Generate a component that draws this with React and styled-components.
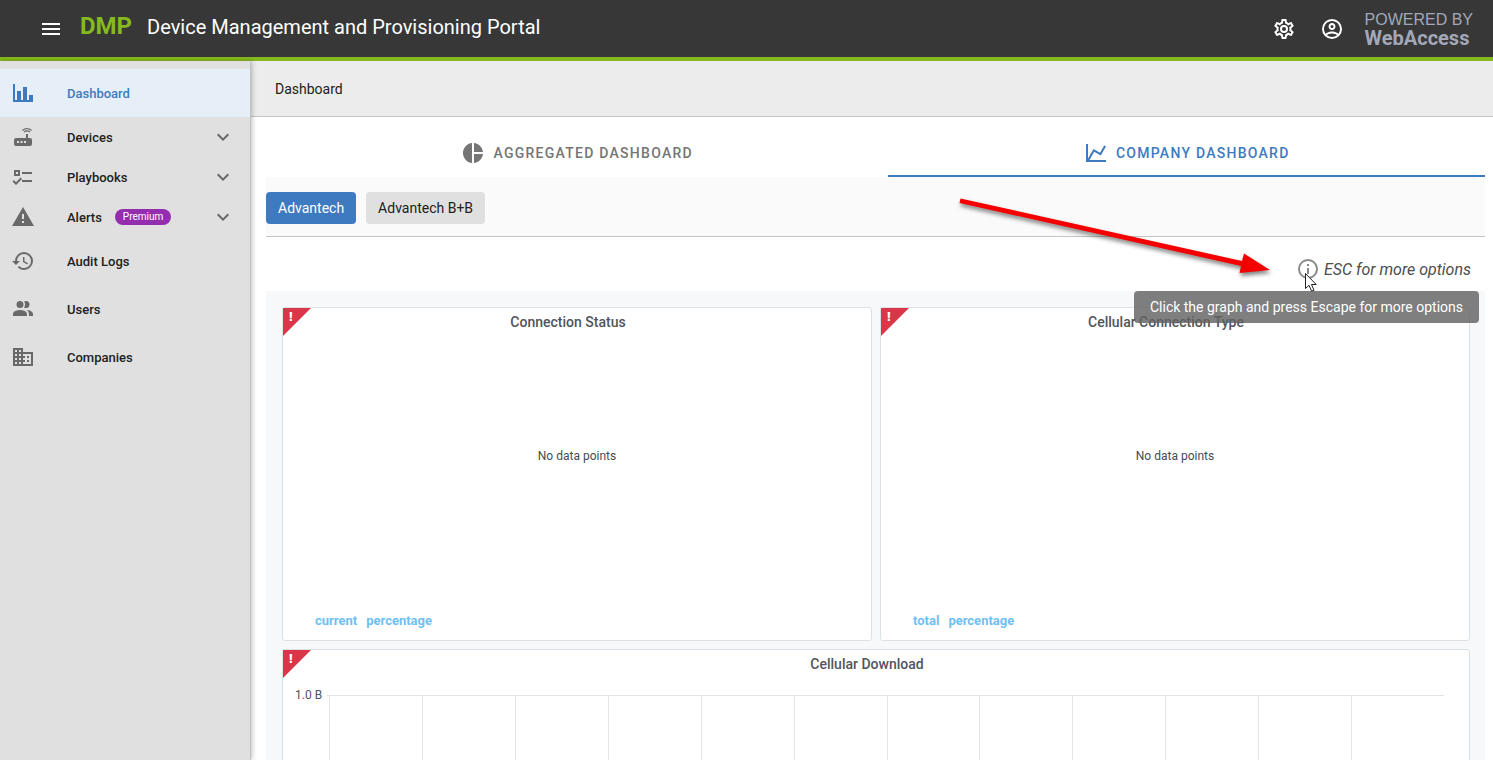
import React from "react";
import styled, { createGlobalStyle } from "styled-components";

const GlobalStyle = createGlobalStyle`
  *, *::before, *::after { box-sizing: border-box; }
  body {
    margin: 0;
    background: #fff;
    color: #212121;
    font-family: Roboto, "Liberation Sans", sans-serif;
    font-size: 14px;
    line-height: 20px;
  }
  button { font: inherit; color: inherit; border: 0; padding: 0; background: none; cursor: pointer; }
  a { color: inherit; text-decoration: none; }
  ul { list-style: none; margin: 0; padding: 0; }
  h1, h2 { margin: 0; }
`;

const paths = {
  menu: "M3,6H21V8H3V6M3,11H21V13H3V11M3,16H21V18H3V16Z",
  cog: "M12,8A4,4 0 0,1 16,12A4,4 0 0,1 12,16A4,4 0 0,1 8,12A4,4 0 0,1 12,8M12,10A2,2 0 0,0 10,12A2,2 0 0,0 12,14A2,2 0 0,0 14,12A2,2 0 0,0 12,10M10,22C9.75,22 9.54,21.82 9.5,21.58L9.13,18.93C8.5,18.68 7.96,18.34 7.44,17.94L4.95,18.95C4.73,19.03 4.46,18.95 4.34,18.73L2.34,15.27C2.21,15.05 2.27,14.78 2.46,14.63L4.57,12.97L4.5,12L4.57,11L2.46,9.37C2.27,9.22 2.21,8.95 2.34,8.73L4.34,5.27C4.46,5.05 4.73,4.96 4.95,5.05L7.44,6.05C7.96,5.66 8.5,5.32 9.13,5.07L9.5,2.42C9.54,2.18 9.75,2 10,2H14C14.25,2 14.46,2.18 14.5,2.42L14.87,5.07C15.5,5.32 16.04,5.66 16.56,6.05L19.05,5.05C19.27,4.96 19.54,5.05 19.66,5.27L21.66,8.73C21.79,8.95 21.73,9.22 21.54,9.37L19.43,11L19.5,12L19.43,13L21.54,14.63C21.73,14.78 21.79,15.05 21.66,15.27L19.66,18.73C19.54,18.95 19.27,19.04 19.05,18.95L16.56,17.95C16.04,18.34 15.5,18.68 14.87,18.93L14.5,21.58C14.46,21.82 14.25,22 14,22H10M11.25,4L10.88,6.61C9.68,6.86 8.62,7.5 7.85,8.39L5.44,7.35L4.69,8.65L6.8,10.2C6.4,11.37 6.4,12.64 6.8,13.8L4.68,15.36L5.43,16.66L7.86,15.62C8.63,16.5 9.68,17.14 10.87,17.38L11.24,20H12.76L13.13,17.39C14.32,17.14 15.37,16.5 16.14,15.62L18.57,16.66L19.32,15.36L17.2,13.81C17.6,12.64 17.6,11.37 17.2,10.2L19.31,8.65L18.56,7.35L16.15,8.39C15.38,7.5 14.32,6.86 13.12,6.62L12.75,4H11.25Z",
  account:
    "M12,2A10,10 0 0,0 2,12A10,10 0 0,0 12,22A10,10 0 0,0 22,12A10,10 0 0,0 12,2M7.07,18.28C7.5,17.38 10.12,16.5 12,16.5C13.88,16.5 16.5,17.38 16.93,18.28C15.57,19.36 13.86,20 12,20C10.14,20 8.43,19.36 7.07,18.28M18.36,16.83C16.93,15.09 13.46,14.5 12,14.5C10.54,14.5 7.07,15.09 5.64,16.83C4.62,15.5 4,13.82 4,12C4,7.59 7.59,4 12,4C16.41,4 20,7.59 20,12C20,13.82 19.38,15.5 18.36,16.83M12,6C10.06,6 8.5,7.56 8.5,9.5C8.5,11.44 10.06,13 12,13C13.94,13 15.5,11.44 15.5,9.5C15.5,7.56 13.94,6 12,6M12,11A1.5,1.5 0 0,1 10.5,9.5A1.5,1.5 0 0,1 12,8A1.5,1.5 0 0,1 13.5,9.5A1.5,1.5 0 0,1 12,11Z",
  bars: "M22,21H2V3H4V19H6V10H10V19H12V6H16V19H18V14H22V21Z",
  router:
    "M20.2,5.9L21,5.1C19.6,3.7 17.8,3 16,3C14.2,3 12.4,3.7 11,5.1L11.8,5.9C13,4.8 14.5,4.2 16,4.2C17.5,4.2 19,4.8 20.2,5.9M19.3,6.7C18.4,5.8 17.2,5.3 16,5.3C14.8,5.3 13.6,5.8 12.7,6.7L13.5,7.5C14.2,6.8 15.1,6.5 16,6.5C16.9,6.5 17.8,6.8 18.5,7.5L19.3,6.7M19,13H17V9H15V13H5A2,2 0 0,0 3,15V19A2,2 0 0,0 5,21H19A2,2 0 0,0 21,19V15A2,2 0 0,0 19,13M8,18H6V16H8V18M11.5,18H9.5V16H11.5V18M15,18H13V16H15V18Z",
  checks:
    "M3,5H9V11H3V5M5,7V9H7V7H5M11,7H21V9H11V7M11,15H21V17H11V15M5,20L1.5,16.5L2.91,15.09L5,17.17L9.59,12.59L11,14L5,20Z",
  alert: "M13,14H11V9H13M13,18H11V16H13M1,21H23L12,2L1,21Z",
  history:
    "M13.5,8H12V13L16.28,15.54L17,14.33L13.5,12.25V8M13,3A9,9 0 0,0 4,12H1L4.96,16.03L9,12H6A7,7 0 0,1 13,5A7,7 0 0,1 20,12A7,7 0 0,1 13,19C11.07,19 9.32,18.21 8.06,16.94L6.64,18.36C8.27,20 10.5,21 13,21A9,9 0 0,0 22,12A9,9 0 0,0 13,3",
  users:
    "M16,17V19H2V17S2,13 9,13 16,17 16,17M12.5,7.5A3.5,3.5 0 1,0 9,11A3.5,3.5 0 0,0 12.5,7.5M15.94,13A5.32,5.32 0 0,1 18,17V19H22V17S22,13.37 15.94,13M15,4A3.39,3.39 0 0,0 13.07,4.59A5,5 0 0,1 13.07,10.41A3.39,3.39 0 0,0 15,11A3.5,3.5 0 0,0 15,4Z",
  domain:
    "M18,15H16V17H18M18,11H16V13H18M20,19H12V17H14V15H12V13H14V11H12V9H20M10,7H8V5H10M10,11H8V9H10M10,15H8V13H10M10,19H8V17H10M6,7H4V5H6M6,11H4V9H6M6,15H4V13H6M6,19H4V17H6M12,7V3H2V21H22V7H12Z",
  chevron: "M7.41,8.58L12,13.17L16.59,8.58L18,10L12,16L6,10L7.41,8.58Z",
  pie: "M11,2V22C5.9,21.5 2,17.2 2,12C2,6.8 5.9,2.5 11,2M13,2V11H22C21.5,6.2 17.8,2.5 13,2M13,13V22C17.7,21.5 21.5,17.8 22,13H13Z",
  line: "M16,11.78L20.24,4.45L21.97,5.45L16.74,14.5L10.23,10.75L5.46,19H22V21H2V3H4V17.54L9.5,8L16,11.78Z",
  info: "M11,9H13V7H11M12,20C7.59,20 4,16.41 4,12C4,7.59 7.59,4 12,4C16.41,4 20,7.59 20,12C20,16.41 16.41,20 12,20M12,2A10,10 0 0,0 2,12A10,10 0 0,0 12,22A10,10 0 0,0 22,12A10,10 0 0,0 12,2M11,17H13V11H11V17Z",
};

const Svg = styled.svg`
  display: block;
  flex: none;
  width: 24px;
  height: 24px;
  fill: currentColor;
`;

const Icon = ({ name }) => (
  <Svg viewBox="0 0 24 24" aria-hidden="true">
    <path d={paths[name]} />
  </Svg>
);

const Shell = styled.div`
  display: flex;
  flex-direction: column;
  height: 100vh;
  overflow: hidden;
`;

const TopBar = styled.header`
  display: flex;
  align-items: center;
  flex: none;
  height: 61px;
  padding: 0 20px 0 39px;
  border-bottom: 4px solid #86b91f;
  background: #373737;
  color: #fff;
`;

const IconButton = styled.button`
  display: flex;
  color: ${(p) => (p.$muted ? "#8a8a8a" : "inherit")};
`;

const Brand = styled.div`
  display: flex;
  align-items: baseline;
  gap: 15px;
  flex: 1;
  padding: 0 0 4px 17px;
`;

const Logo = styled.span`
  color: #86b91f;
  font-size: 24px;
  font-weight: 700;
  line-height: 32px;
`;

const Title = styled.h1`
  font-size: 20px;
  font-weight: 400;
  line-height: 32px;
`;

const Actions = styled.div`
  display: flex;
  align-items: center;
  gap: 24px;
`;

const Powered = styled.div`
  display: flex;
  flex-direction: column;
  margin-left: -3px;
  color: #a2a8b8;
  font-family: "Liberation Sans", Arial, sans-serif;
  font-size: 16px;
  line-height: 18px;
`;

const WebAccess = styled.strong`
  font-family: Roboto, sans-serif;
  font-size: 20px;
  line-height: 18px;
`;

const Body = styled.div`
  display: flex;
  flex: 1;
  min-height: 0;
`;

const Sidebar = styled.nav`
  position: relative;
  z-index: 1;
  flex: none;
  width: 251px;
  padding-top: 8px;
  border-right: 1px solid #c2c2c2;
  background: #e0e0e0;
  box-shadow: 1px 0 5px rgba(0, 0, 0, 0.25);
`;

const NavLink = styled.a`
  display: flex;
  align-items: center;
  height: ${(p) => (p.$group ? "40px" : "48px")};
  padding: 0 15px 0 11px;
  background: ${(p) => (p.$active ? "#e6eef7" : "transparent")};
  color: ${(p) => (p.$active ? "#3e7abf" : "#212121")};
  font-size: 13px;
  font-weight: 500;

  svg { color: ${(p) => (p.$active ? "#3e7abf" : "#696969")}; }
`;

const NavLabel = styled.span`
  display: flex;
  align-items: center;
  flex: 1;
  gap: 13px;
  padding: 1px 0 0 32px;
  line-height: 21px;
`;

const Badge = styled.span`
  margin-bottom: 2px;
  padding: 0 8px;
  border-radius: 8px;
  background: #942dae;
  color: #fff;
  font-size: 10px;
  font-weight: 400;
  line-height: 16px;
`;

const Main = styled.main`
  flex: 1;
  min-width: 0;
`;

const Breadcrumb = styled.div`
  height: 56px;
  padding: 0 24px;
  border-bottom: 1px solid #c4c4c4;
  background: #ececec;
  line-height: 56px;
`;

const Content = styled.div`
  padding: 12px 8px 0 15px;
`;

const Tabs = styled.div`
  display: flex;
`;

const Tab = styled.button`
  display: flex;
  align-items: center;
  justify-content: center;
  flex: 1 1 auto;
  gap: 8px;
  height: 48px;
  padding: 2px 16px 0;
  border-bottom: 2px solid ${(p) => (p.$active ? "#3e7abf" : "transparent")};
  color: ${(p) => (p.$active ? "#3e7abf" : "#757575")};
  font-weight: 500;
  letter-spacing: 0.09em;
  text-transform: uppercase;
`;

const Companies = styled.div`
  display: flex;
  gap: 10px;
  height: 60px;
  padding-top: 15px;
  border-bottom: 1px solid #c4c4c4;
  background: #fafafa;
`;

const Chip = styled.button`
  height: 32px;
  padding: 0 12px;
  border-radius: 4px;
  background: ${(p) => (p.$active ? "#3e7abf" : "#e0e0e0")};
  color: ${(p) => (p.$active ? "#fff" : "#212121")};
`;

const HintRow = styled.div`
  position: relative;
  z-index: 1;
  display: flex;
  align-items: center;
  justify-content: flex-end;
  gap: 4px;
  height: 54px;
  padding: 10px 14px 0 0;
`;

const Hint = styled.em`
  padding-top: 2px;
  color: #4d4d4d;
  font-size: 16px;
  line-height: 22px;
`;

const Tooltip = styled.div`
  position: absolute;
  top: 54px;
  right: 6px;
  padding: 6px 16px;
  border-radius: 4px;
  background: rgba(97, 97, 97, 0.81);
  color: #fff;
`;

const Arrow = styled.svg`
  position: absolute;
  top: -42px;
  right: 210px;
  width: 320px;
  height: 86px;
  filter: drop-shadow(1px 3px 2px rgba(0, 0, 0, 0.5));
  pointer-events: none;
`;

const Cursor = styled.svg`
  position: absolute;
  top: 35px;
  right: 167px;
  width: 14px;
  height: 21px;
  pointer-events: none;
`;

const Board = styled.div`
  display: grid;
  grid-template-columns: 1fr 1fr;
  gap: 8px;
  padding: 16px 15px 16px 16px;
  background: #f6f8fa;
`;

const Panel = styled.section`
  position: relative;
  display: flex;
  flex-direction: column;
  grid-column: ${(p) => (p.$wide ? "1 / -1" : "auto")};
  height: 334px;
  border: 1px solid #dce1e6;
  border-radius: 3px;
  background: #fff;
`;

const PanelTitle = styled.h2`
  padding: 4px 18px 0 0;
  color: #52545c;
  font-size: 14px;
  font-weight: 500;
  text-align: center;
`;

const Corner = styled.span`
  position: absolute;
  top: 0;
  left: 0;
  width: 28px;
  height: 28px;
  padding-left: 6px;
  background: #d9364a;
  clip-path: polygon(0 0, 100% 0, 0 100%);
  color: #fff;
  font-size: 13px;
  font-weight: 900;
  line-height: 18px;
`;

const Empty = styled.p`
  display: flex;
  align-items: center;
  justify-content: center;
  flex: 1;
  margin: 0;
  padding-bottom: 32px;
  color: #464c54;
  font-size: 12px;
`;

const Legend = styled.div`
  display: flex;
  gap: 9px;
  padding: 0 32px 9px;
`;

const LegendButton = styled.button`
  color: #6fc0f2;
  font-size: 13px;
  font-weight: 700;
`;

const Chart = styled.div`
  display: flex;
  flex: 1;
  gap: 5px;
  padding: 11px 25px 24px 12px;
`;

const AxisLabel = styled.span`
  color: #52545c;
  font-size: 12px;
`;

const Grid = styled.div`
  display: grid;
  grid-template-columns: repeat(12, 1fr);
  flex: 1;
  margin-top: 10px;
  padding-left: 2px;
  border-top: 1px solid #e4e4e4;
`;

const GridCell = styled.div`
  border-left: 1px solid #e4e4e4;
`;

const navItems = [
  { label: "Dashboard", icon: "bars", active: true },
  { label: "Devices", icon: "router", group: true },
  { label: "Playbooks", icon: "checks", group: true },
  { label: "Alerts", icon: "alert", group: true, badge: "Premium" },
  { label: "Audit Logs", icon: "history" },
  { label: "Users", icon: "users" },
  { label: "Companies", icon: "domain" },
];

const summaryPanels = [
  { title: "Connection Status", legend: ["current", "percentage"] },
  { title: "Cellular Connection Type", legend: ["total", "percentage"] },
];

export default function App() {
  return (
    <Shell>
      <GlobalStyle />
      <TopBar>
        <IconButton aria-label="Menu"><Icon name="menu" /></IconButton>
        <Brand>
          <Logo>DMP</Logo>
          <Title>Device Management and Provisioning Portal</Title>
        </Brand>
        <Actions>
          <IconButton aria-label="Settings"><Icon name="cog" /></IconButton>
          <IconButton aria-label="Account"><Icon name="account" /></IconButton>
          <Powered>
            <span>POWERED BY</span>
            <WebAccess>WebAccess</WebAccess>
          </Powered>
        </Actions>
      </TopBar>
      <Body>
        <Sidebar>
          <ul>
            {navItems.map((item) => (
              <li key={item.label}>
                <NavLink href="#" $active={item.active} $group={item.group}>
                  <Icon name={item.icon} />
                  <NavLabel>
                    {item.label}
                    {item.badge && <Badge>{item.badge}</Badge>}
                  </NavLabel>
                  {item.group && <Icon name="chevron" />}
                </NavLink>
              </li>
            ))}
          </ul>
        </Sidebar>
        <Main>
          <Breadcrumb>Dashboard</Breadcrumb>
          <Content>
            <Tabs role="tablist">
              <Tab role="tab" aria-selected="false"><Icon name="pie" />Aggregated Dashboard</Tab>
              <Tab role="tab" aria-selected="true" $active><Icon name="line" />Company Dashboard</Tab>
            </Tabs>
            <Companies>
              <Chip $active>Advantech</Chip>
              <Chip>Advantech B+B</Chip>
            </Companies>
            <HintRow>
              <IconButton $muted aria-label="Graph help" aria-describedby="graph-help">
                <Icon name="info" />
              </IconButton>
              <Hint>ESC for more options</Hint>
              <Tooltip role="tooltip" id="graph-help">
                Click the graph and press Escape for more options
              </Tooltip>
              <Arrow viewBox="0 0 320 86" aria-hidden="true">
                <path d="M5.500,3.500L287,66L289,58.500L315,75L284.500,78L286,71L4.500,8Z" fill="#f40000" />
              </Arrow>
              <Cursor viewBox="0 0 14 21" aria-hidden="true">
                <path
                  d="M1.500,1.500V16.500L5,13.300L7.600,19.200L10,18.200L7.500,12.500H12.200Z"
                  fill="#fff"
                  stroke="#222"
                />
              </Cursor>
            </HintRow>
            <Board>
              {summaryPanels.map((panel) => (
                <Panel key={panel.title}>
                  <Corner>!</Corner>
                  <PanelTitle>{panel.title}</PanelTitle>
                  <Empty>No data points</Empty>
                  <Legend>
                    {panel.legend.map((name) => (
                      <LegendButton key={name}>{name}</LegendButton>
                    ))}
                  </Legend>
                </Panel>
              ))}
              <Panel $wide>
                <Corner>!</Corner>
                <PanelTitle>Cellular Download</PanelTitle>
                <Chart>
                  <AxisLabel>1.0 B</AxisLabel>
                  <Grid>
                    {Array.from({ length: 12 }, (_, i) => (
                      <GridCell key={i} />
                    ))}
                  </Grid>
                </Chart>
              </Panel>
            </Board>
          </Content>
        </Main>
      </Body>
    </Shell>
  );
}
